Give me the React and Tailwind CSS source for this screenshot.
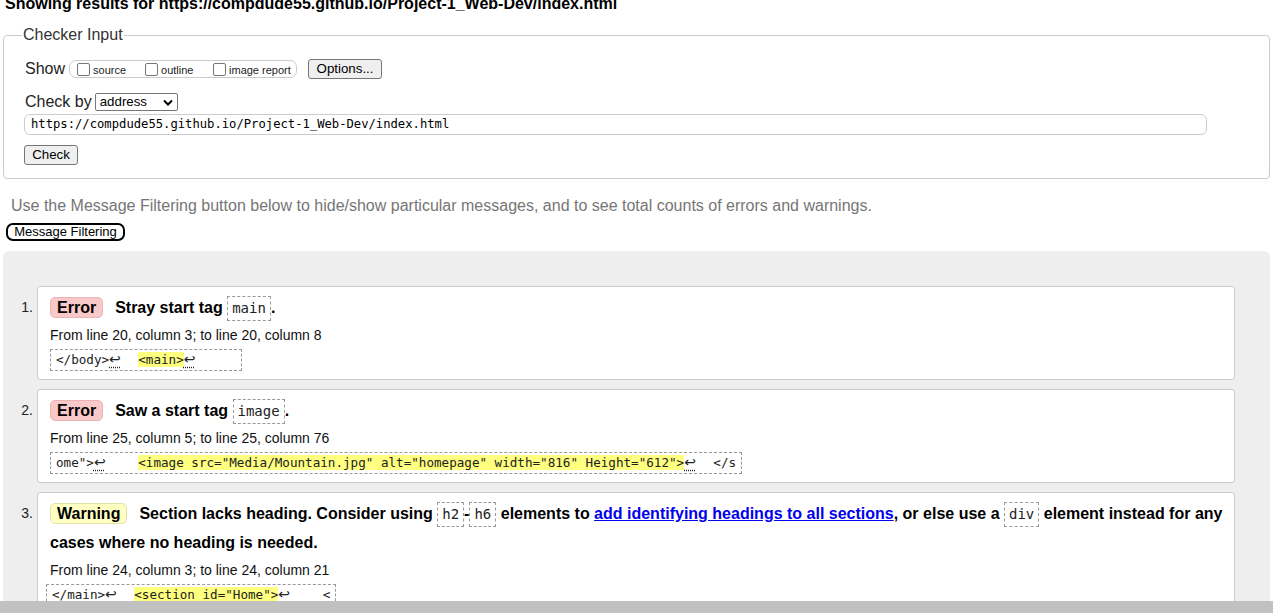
import React from "react";

const sans = "font-['Liberation_Sans',Arial,sans-serif]";
const mono = "font-['DejaVu_Sans_Mono',monospace]";

function Code({ children }) {
  return (
    <code
      className={`${mono} inline-block border border-dashed border-[#999] px-[4px] py-[2px] text-[14px] font-normal leading-[19px] text-[#222]`}
    >
      {children}
    </code>
  );
}

function Badge({ kind }) {
  const styles =
    kind === "Error"
      ? "bg-[#f9c9c9] border-[#eab3b3]"
      : "bg-[#ffffc4] border-[#e3e3a8]";
  return (
    <span
      className={`inline-block mr-[12px] rounded-[5px] border px-[6px] py-[1px] text-[16px] font-bold leading-[17px] ${styles}`}
    >
      {kind}
    </span>
  );
}

function Ret() {
  return (
    <span className="inline-block w-[14px] font-['DejaVu_Sans',sans-serif] text-[14px] leading-[14px] underline decoration-dotted underline-offset-[3px]">
      ↩
    </span>
  );
}

function Hi({ children }) {
  return <span className="bg-[#ffff80]">{children}</span>;
}

function Extract({ children, cls = "" }) {
  return (
    <div className={`mt-[3px] flex ${cls}`}>
      <div
        className={`${mono} whitespace-pre border border-dashed border-[#999] px-[5px] text-[12.6px] leading-[20px] text-[#222]`}
      >
        {children}
      </div>
    </div>
  );
}

function Item({ n, title, from, extract }) {
  return (
    <div className="flex">
      <div className="w-[34px] shrink-0 pr-[4px] pt-[7px] text-right text-[14px] leading-[29px] text-[#222]">
        {n}.
      </div>
      <div className="flex-1 rounded-[3px] border border-[#ccc] bg-white pl-[12px] pr-[10px] pt-[6px] pb-[8px]">
        <p className="text-[16px] font-bold leading-[29px] text-black">{title}</p>
        <p className="mt-[2px] text-[14px] leading-[22px] text-[#111]">{from}</p>
        {extract}
      </div>
    </div>
  );
}

function Checkbox({ label }) {
  return (
    <span className="flex items-center">
      <span className="mr-[3px] h-[13px] w-[13px] rounded-[2px] border border-[#767676] bg-white" />
      <span className="pt-[3px] text-[11px] leading-[13px] text-[#222]">{label}</span>
    </span>
  );
}

function Btn({ children, cls }) {
  return (
    <span
      className={`inline-flex items-center justify-center rounded-[3px] border border-[#767676] bg-[#efefef] text-[13.3px] text-black ${cls}`}
    >
      {children}
    </span>
  );
}

export default function App() {
  return (
    <div className={`${sans} flex h-[613px] flex-col overflow-hidden bg-white text-black`}>
      <div className="flex-1 overflow-hidden px-[3px]">
        <h2 className="-mt-[5px] ml-[2px] whitespace-nowrap text-[16px] font-bold leading-[18px]">
          Showing results for https://compdude55.github.io/Project-1_Web-Dev/index.html
        </h2>

        {/* Checker input */}
        <fieldset className="mt-[13px] rounded-[4px] border border-[#ccc] pl-[18px] pr-[18px] pb-[12px]">
          <legend className="px-[1px] text-[16px] leading-[18px] text-[#333]">Checker Input</legend>
          <div className="pl-[3px]">
            <div className="mt-[15px] flex h-[20px] items-center">
              <span className="text-[16px] text-[#222]">Show</span>
              <span className="ml-[4px] flex h-[18px] w-[228px] items-center rounded-[7px] border border-[#ccc] pl-[7px]">
                <span className="w-[68px]"><Checkbox label="source" /></span>
                <span className="w-[68px]"><Checkbox label="outline" /></span>
                <Checkbox label="image report" />
              </span>
              <Btn cls="ml-[11px] h-[20px] w-[74px]">Options...</Btn>
            </div>

            <div className="mt-[14px] flex h-[18px] items-center">
              <span className="text-[16px] text-[#222]">Check by</span>
              <span className="ml-[3px] flex h-[18px] w-[83px] items-center justify-between rounded-[2px] border border-[#767676] bg-white pl-[4px] pr-[4px]">
                <span className="text-[13.3px] text-black">address</span>
                <svg width="10" height="7" viewBox="0 0 10 7">
                  <path d="M1 1.5 L5 5.5 L9 1.5" fill="none" stroke="#000" strokeWidth="2" />
                </svg>
              </span>
            </div>
          </div>

          <div
            className={`${mono} mt-[3px] ml-[2px] mr-[44px] flex h-[21px] items-center rounded-[6px] border border-[#ccc] pl-[6px] text-[12.2px] text-black`}
          >
            https://compdude55.github.io/Project-1_Web-Dev/index.html
          </div>

          <div className="mt-[7px] ml-[2px]">
            <Btn cls="h-[20px] w-[54px]">Check</Btn>
          </div>
        </fieldset>

        <p className="mt-[18px] ml-[8px] text-[16px] leading-[18px] text-[#767676]">
          Use the Message Filtering button below to hide/show particular messages, and to see total counts of errors and warnings.
        </p>
        <div className="mt-[8px] ml-[3px] flex">
          <span className="flex h-[18px] w-[119px] items-center justify-center rounded-[7px] border-2 border-black bg-white text-[13px] text-black">
            Message Filtering
          </span>
        </div>

        {/* Results */}
        <div className="mt-[10px] flex flex-col gap-[9px] rounded-t-[6px] bg-[#eeeeee] pt-[35px] pr-[35px] pb-[20px]">
          <Item
            n={1}
            title={
              <>
                <Badge kind="Error" />
                Stray start tag <Code>main</Code>.
              </>
            }
            from="From line 20, column 3; to line 20, column 8"
            extract={
              <Extract>
                {"</body>"}
                <Ret />
                {"  "}
                <Hi>{"<main>"}</Hi>
                <Ret />
                {"     "}
              </Extract>
            }
          />
          <Item
            n={2}
            title={
              <>
                <Badge kind="Error" />
                Saw a start tag <Code>image</Code>.
              </>
            }
            from="From line 25, column 5; to line 25, column 76"
            extract={
              <Extract>
                {'ome">'}
                <Ret />
                {"    "}
                <Hi>{'<image src="Media/Mountain.jpg" alt="homepage" width="816" Height="612">'}</Hi>
                <Ret />
                {"  </s"}
              </Extract>
            }
          />
          <Item
            n={3}
            title={
              <>
                <Badge kind="Warning" />
                Section lacks heading. Consider using <Code>h2</Code>-<Code>h6</Code> elements to{" "}
                <a href="#" className="text-[#0000ee] underline">
                  add identifying headings to all sections
                </a>
                , or else use a <Code>div</Code> element instead for any cases where no heading is needed.
              </>
            }
            from="From line 24, column 3; to line 24, column 21"
            extract={
              <Extract cls="-ml-[4px]">
                {"</main>"}
                <Ret />
                {"  "}
                <Hi>{'<section id="Home">'}</Hi>
                <Ret />
                {"    <"}
              </Extract>
            }
          />
        </div>
      </div>
      <div className="h-[12px] shrink-0 bg-[#c1c1c1]" />
    </div>
  );
}
